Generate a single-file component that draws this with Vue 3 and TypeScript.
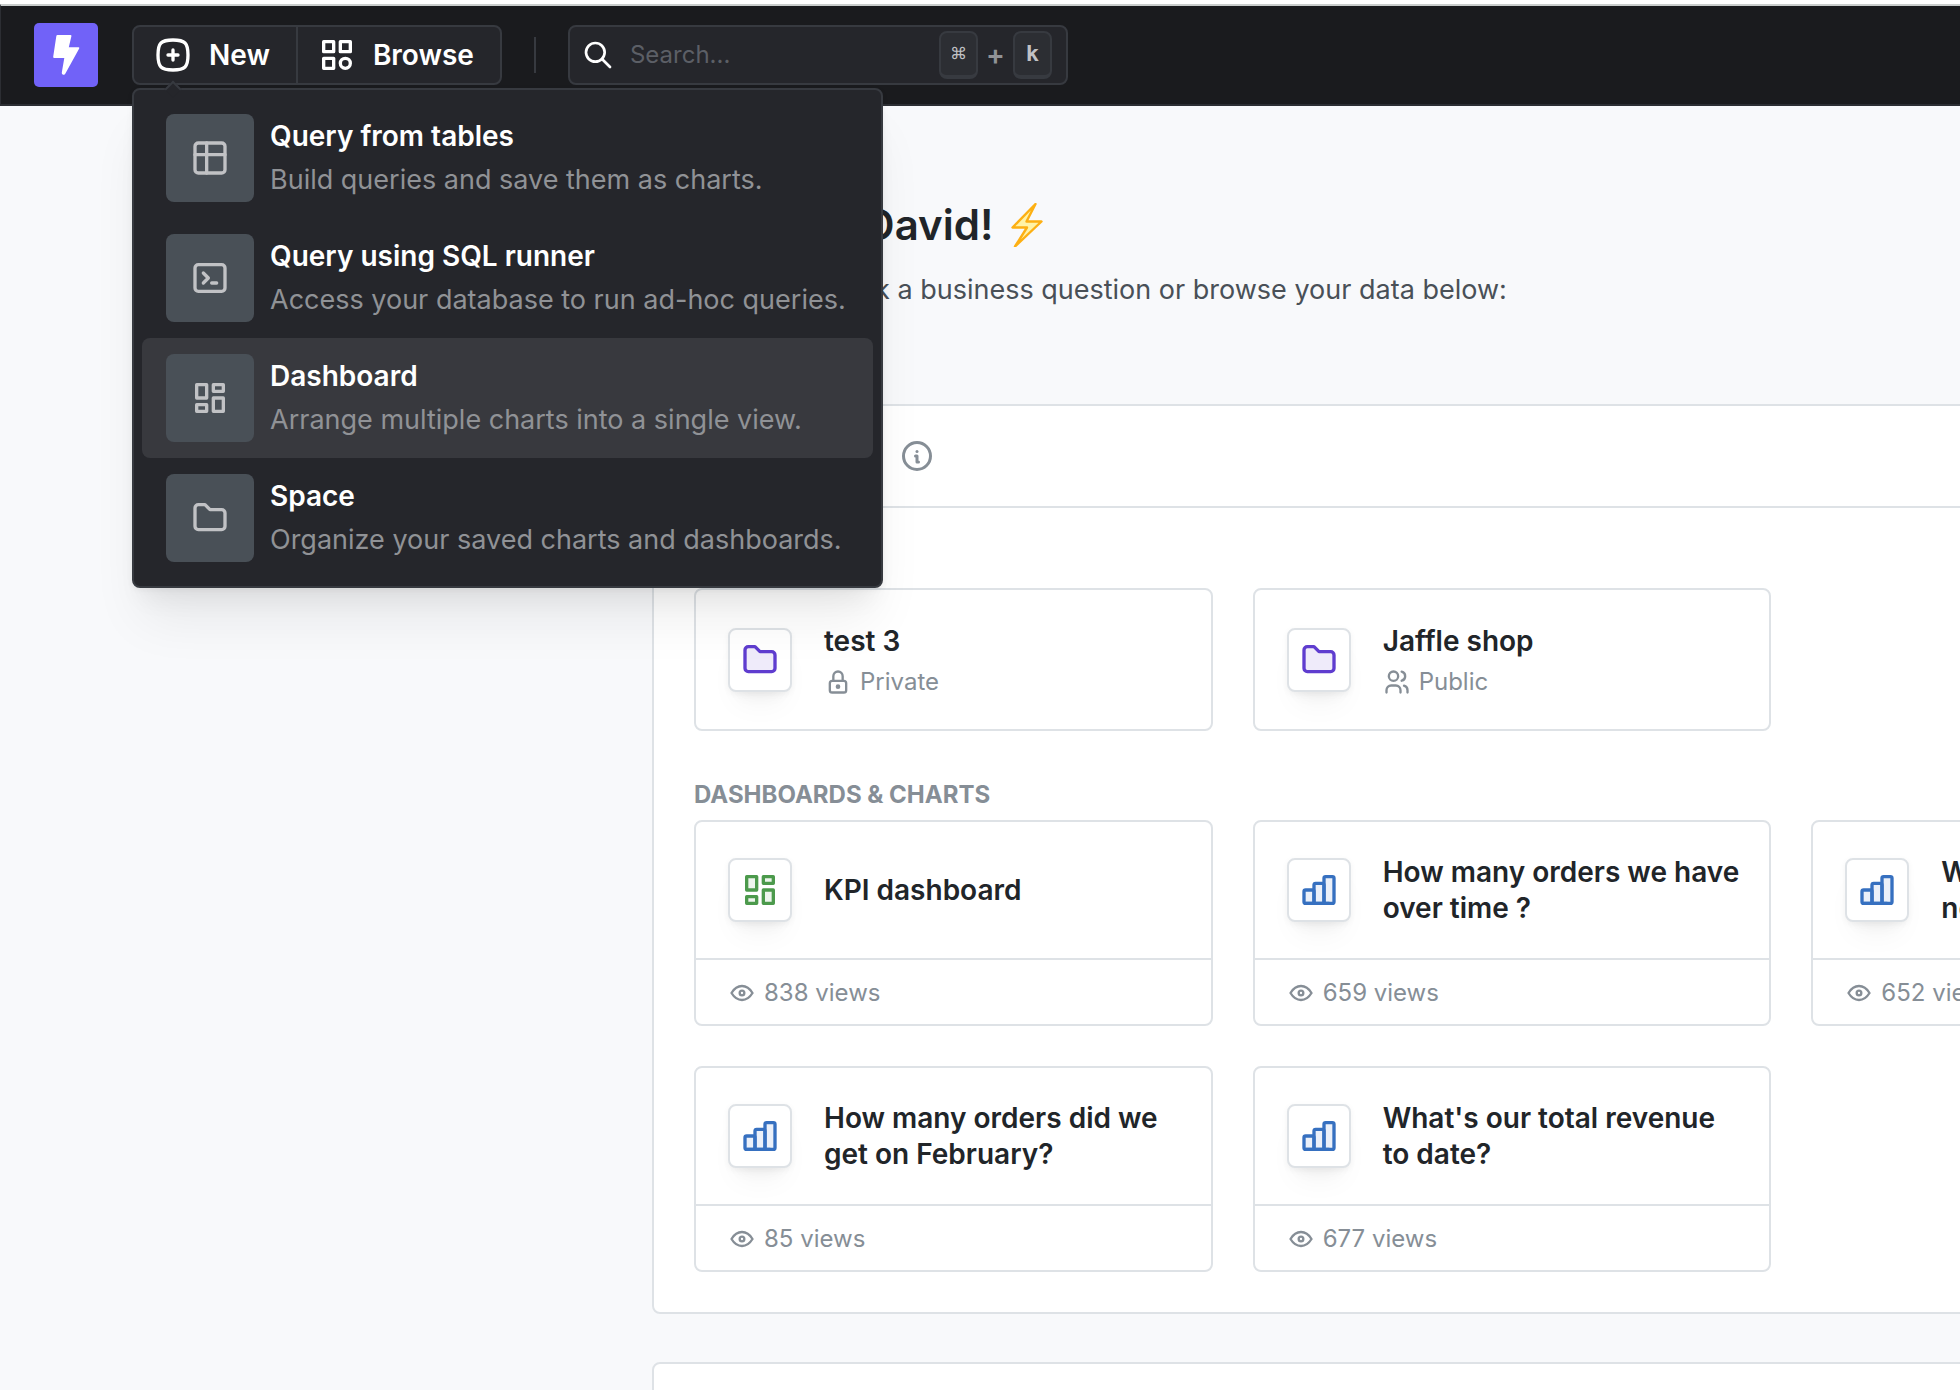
<script setup lang="ts">
import { ref } from 'vue'

interface MenuItem {
  title: string
  description: string
  icon: string[]
}

interface Space {
  name: string
  access: string
  icon: string[]
}

interface Content {
  name: string
  views: number
  kind: 'dashboard' | 'chart'
}

const icons: Record<string, string[]> = {
  plus: [
    'M12 3c7.2 0 9 1.8 9 9s-1.8 9-9 9s-9-1.8-9-9s1.8-9 9-9z',
    'M9 12h6',
    'M12 9v6',
  ],
  category: [
    'M4 4h6v6H4z',
    'M14 4h6v6h-6z',
    'M4 14h6v6H4z',
    'M14 17a3 3 0 1 0 6 0a3 3 0 1 0-6 0',
  ],
  search: ['M3 10a7 7 0 1 0 14 0a7 7 0 1 0-14 0', 'M21 21l-6-6'],
  table: [
    'M3 5a2 2 0 0 1 2-2h14a2 2 0 0 1 2 2v14a2 2 0 0 1-2 2H5a2 2 0 0 1-2-2z',
    'M3 10h18',
    'M10 3v18',
  ],
  terminal: [
    'M8 9l3 3l-3 3',
    'M13 15h3',
    'M3 6a2 2 0 0 1 2-2h14a2 2 0 0 1 2 2v12a2 2 0 0 1-2 2H5a2 2 0 0 1-2-2z',
  ],
  dashboard: ['M4 4h6v8H4z', 'M4 16h6v4H4z', 'M14 12h6v8h-6z', 'M14 4h6v4h-6z'],
  folder: [
    'M5 4h4l3 3h7a2 2 0 0 1 2 2v8a2 2 0 0 1-2 2H5a2 2 0 0 1-2-2V6a2 2 0 0 1 2-2',
  ],
  chart: [
    'M3 13a1 1 0 0 1 1-1h4a1 1 0 0 1 1 1v6a1 1 0 0 1-1 1H4a1 1 0 0 1-1-1z',
    'M9 9a1 1 0 0 1 1-1h4a1 1 0 0 1 1 1v10a1 1 0 0 1-1 1h-4a1 1 0 0 1-1-1z',
    'M15 5a1 1 0 0 1 1-1h4a1 1 0 0 1 1 1v14a1 1 0 0 1-1 1h-4a1 1 0 0 1-1-1z',
    'M4 20h14',
  ],
  lock: [
    'M5 13a2 2 0 0 1 2-2h10a2 2 0 0 1 2 2v6a2 2 0 0 1-2 2H7a2 2 0 0 1-2-2z',
    'M11 16a1 1 0 1 0 2 0a1 1 0 0 0-2 0',
    'M8 11V7a4 4 0 1 1 8 0v4',
  ],
  users: [
    'M5 7a4 4 0 1 0 8 0a4 4 0 1 0-8 0',
    'M3 21v-2a4 4 0 0 1 4-4h4a4 4 0 0 1 4 4v2',
    'M16 3.13a4 4 0 0 1 0 7.75',
    'M21 21v-2a4 4 0 0 0-3-3.85',
  ],
  eye: [
    'M10 12a2 2 0 1 0 4 0a2 2 0 0 0-4 0',
    'M21 12c-2.4 4-5.4 6-9 6c-3.6 0-6.6-2-9-6c2.4-4 5.4-6 9-6c3.6 0 6.6 2 9 6',
  ],
  info: ['M3 12a9 9 0 1 0 18 0a9 9 0 0 0-18 0', 'M12 9h.01', 'M11 12h1v4h1'],
}

const menuItems: MenuItem[] = [
  {
    title: 'Query from tables',
    description: 'Build queries and save them as charts.',
    icon: icons.table,
  },
  {
    title: 'Query using SQL runner',
    description: 'Access your database to run ad-hoc queries.',
    icon: icons.terminal,
  },
  {
    title: 'Dashboard',
    description: 'Arrange multiple charts into a single view.',
    icon: icons.dashboard,
  },
  {
    title: 'Space',
    description: 'Organize your saved charts and dashboards.',
    icon: icons.folder,
  },
]

const spaces: Space[] = [
  { name: 'test 3', access: 'Private', icon: icons.lock },
  { name: 'Jaffle shop', access: 'Public', icon: icons.users },
]

const contents: Content[] = [
  { name: 'KPI dashboard', views: 838, kind: 'dashboard' },
  { name: 'How many orders we have over time ?', views: 659, kind: 'chart' },
  { name: 'Which customers placed new orders?', views: 652, kind: 'chart' },
  { name: 'How many orders did we get on February?', views: 85, kind: 'chart' },
  { name: "What's our total revenue to date?", views: 677, kind: 'chart' },
]

const menuOpen = ref(true)
const activeItem = ref(2)
const query = ref('')
</script>

<template>
  <div class="page">
    <header class="navbar">
      <a class="logo" href="#" aria-label="Home">
        <svg viewBox="0 0 64 64" aria-hidden="true">
          <path
            d="M23.500 12h13q1.200 0 .9 1.200l-2.600 11h9.600q1.300 0 .8 1.200L31.400 50.500q-.7 1.500-2.200 1.200q-1.700-.5-1.400-2.200L30.300 35H20.300q-1.300 0-1.100-1.300L22.300 13.200q.2-1.200 1.200-1.200z"
            fill="#fff"
          />
        </svg>
      </a>

      <div class="nav-group">
        <button
          type="button"
          class="nav-button"
          aria-haspopup="menu"
          :aria-expanded="menuOpen"
          @click="menuOpen = !menuOpen"
        >
          <svg class="icon icon-lg" viewBox="0 0 24 24" aria-hidden="true">
            <path v-for="d in icons.plus" :key="d" :d="d" />
          </svg>
          New
        </button>
        <button type="button" class="nav-button">
          <svg class="icon icon-lg" viewBox="0 0 24 24" aria-hidden="true">
            <path v-for="d in icons.category" :key="d" :d="d" />
          </svg>
          Browse
        </button>

        <div v-if="menuOpen" class="menu" role="menu">
          <button
            v-for="(item, index) in menuItems"
            :key="item.title"
            type="button"
            role="menuitem"
            class="menu-item"
            :class="{ active: index === activeItem }"
            @mouseenter="activeItem = index"
          >
            <span class="menu-icon">
              <svg class="icon icon-lg" viewBox="0 0 24 24" aria-hidden="true">
                <path v-for="d in item.icon" :key="d" :d="d" />
              </svg>
            </span>
            <span class="menu-text">
              <span class="menu-title">{{ item.title }}</span>
              <span class="menu-description">{{ item.description }}</span>
            </span>
          </button>
        </div>
      </div>

      <span class="nav-divider"></span>

      <label class="search">
        <svg class="icon icon-md" viewBox="0 0 24 24" aria-hidden="true">
          <path v-for="d in icons.search" :key="d" :d="d" />
        </svg>
        <input v-model="query" type="text" placeholder="Search..." aria-label="Search" />
        <span class="shortcut">
          <kbd class="symbol">⌘</kbd>
          <span>+</span>
          <kbd>k</kbd>
        </span>
      </label>
    </header>

    <main class="content">
      <section class="greeting">
        <h1>
          Welcome, David!
          <svg class="bolt" viewBox="0 0 32 44" aria-hidden="true">
            <path
              d="M24.500 1L1.500 24.500H16L4 43.500L30.500 18.500H15.500z"
              fill="#fff3a6"
              stroke="#fdb013"
              stroke-width="2.400"
              stroke-linejoin="round"
            />
          </svg>
        </h1>
        <p>Run a query to ask a business question or browse your data below:</p>
      </section>

      <section class="panel">
        <div class="panel-header">
          <h2>Pinned items</h2>
          <svg class="icon icon-info" viewBox="0 0 24 24" aria-hidden="true">
            <path v-for="d in icons.info" :key="d" :d="d" />
          </svg>
        </div>

        <div class="panel-body">
          <section>
            <h3>Spaces</h3>
            <div class="cards">
              <a v-for="space in spaces" :key="space.name" href="#" class="card space-card">
                <span class="tile folder">
                  <svg class="icon icon-lg" viewBox="0 0 24 24" aria-hidden="true">
                    <path v-for="d in icons.folder" :key="d" :d="d" />
                  </svg>
                </span>
                <span class="space-text">
                  <span class="space-name">{{ space.name }}</span>
                  <span class="meta">
                    <svg class="icon icon-sm" viewBox="0 0 24 24" aria-hidden="true">
                      <path v-for="d in space.icon" :key="d" :d="d" />
                    </svg>
                    {{ space.access }}
                  </span>
                </span>
              </a>
            </div>
          </section>

          <section>
            <h3>Dashboards &amp; charts</h3>
            <div class="cards">
              <a v-for="item in contents" :key="item.name" href="#" class="card">
                <span class="card-main">
                  <span class="tile" :class="item.kind">
                    <svg class="icon icon-lg" viewBox="0 0 24 24" aria-hidden="true">
                      <path v-for="d in icons[item.kind]" :key="d" :d="d" />
                    </svg>
                  </span>
                  <span class="card-name">{{ item.name }}</span>
                </span>
                <span class="card-footer meta">
                  <svg class="icon icon-sm" viewBox="0 0 24 24" aria-hidden="true">
                    <path v-for="d in icons.eye" :key="d" :d="d" />
                  </svg>
                  {{ item.views }} views
                </span>
              </a>
            </div>
          </section>
        </div>
      </section>

      <section class="panel next-panel"></section>
    </main>
  </div>
</template>

<style>
html,
body {
  margin: 0;
  background: #f8f9fb;
}
</style>

<style scoped>
.page {
  height: 100vh;
  overflow: hidden;
  box-sizing: border-box;
  border-top: 4px solid #fff;
  background: #f8f9fb;
  color: #212529;
  font-family: Inter, 'Noto Sans', sans-serif;
  font-size: 28px;
  line-height: 44px;
}

.page *,
.page *::before {
  box-sizing: border-box;
}

button,
input {
  font: inherit;
}

a {
  color: inherit;
  text-decoration: none;
}

.icon {
  display: block;
  flex: none;
  fill: none;
  stroke: currentColor;
  stroke-width: 2;
  stroke-linecap: round;
  stroke-linejoin: round;
}

.icon-sm {
  width: 28px;
  height: 28px;
}

.icon-md {
  width: 32px;
  height: 32px;
}

.icon-info {
  width: 36px;
  height: 36px;
  color: #868e96;
}

.icon-lg {
  width: 40px;
  height: 40px;
}

/* Top bar */
.navbar {
  display: flex;
  align-items: center;
  height: 102px;
  padding-left: 33px;
  border-top: 2px solid #c9cdcc;
  border-bottom: 2px solid #2c2e33;
  border-left: 1px solid #2c2e33;
  background: #1a1b1e;
}

.logo {
  width: 64px;
  height: 64px;
  border-radius: 5px;
  background: #7162f8;
}

.logo svg {
  display: block;
}

.nav-group {
  position: relative;
  display: flex;
  height: 60px;
  margin-left: 34px;
  border: 2px solid #373a40;
  border-radius: 8px;
  background: #25262b;
}

.nav-button {
  display: flex;
  align-items: center;
  gap: 16px;
  padding: 0 26px 0 19px;
  border: 0;
  background: none;
  color: #fff;
  font-weight: 600;
}

.nav-button + .nav-button {
  border-left: 2px solid #373a40;
}

.nav-divider {
  width: 2px;
  height: 36px;
  margin: 0 32px;
  background: #373a40;
}

.search {
  display: flex;
  align-items: center;
  width: 500px;
  height: 60px;
  padding: 0 14px 0 12px;
  border: 2px solid #373a40;
  border-radius: 8px;
  background: #25262b;
  color: #fff;
}

.search input {
  flex: 1;
  min-width: 0;
  padding: 0 16px;
  border: 0;
  outline: 0;
  background: none;
  color: #fff;
  font-size: 24px;
}

.search input::placeholder {
  color: #5c5f66;
  opacity: 1;
}

.shortcut {
  display: flex;
  align-items: center;
  gap: 8px;
  color: #909296;
  font-weight: 600;
}

kbd {
  width: 39px;
  height: 48px;
  border: 2px solid #373a40;
  border-bottom-width: 4px;
  border-radius: 8px;
  background: #2c2e33;
  color: #c1c2c5;
  font: 700 22px/42px 'DejaVu Sans Mono', 'Liberation Mono', monospace;
  text-align: center;
}

kbd.symbol {
  font-size: 24px;
  font-weight: 400;
}

/* New menu */
.menu {
  position: absolute;
  z-index: 10;
  top: 61px;
  left: -2px;
  min-width: 751px;
  padding: 8px;
  border: 2px solid #373a40;
  border-radius: 8px;
  background: #25262b;
  box-shadow:
    0 2px 6px rgba(0, 0, 0, 0.05),
    0 40px 50px -10px rgba(0, 0, 0, 0.07),
    0 20px 24px -10px rgba(0, 0, 0, 0.06);
}

.menu::before {
  content: '';
  position: absolute;
  top: -7px;
  left: 33px;
  width: 12px;
  height: 12px;
  border: 2px solid #373a40;
  border-right: 0;
  border-bottom: 0;
  background: #25262b;
  transform: rotate(45deg);
}

.menu-item {
  display: flex;
  align-items: center;
  gap: 16px;
  width: 100%;
  padding: 16px 24px;
  border: 0;
  border-radius: 8px;
  background: none;
  text-align: left;
  white-space: nowrap;
}

.menu-item.active {
  background: #38393e;
}

.menu-icon {
  display: grid;
  place-items: center;
  width: 88px;
  height: 88px;
  border-radius: 8px;
  background: #495057;
  color: #c1c2c5;
}

.menu-text,
.space-text {
  display: flex;
  flex-direction: column;
}

.menu-title {
  color: #fff;
  font-weight: 600;
}

.menu-description {
  color: #909296;
  font-size: 27px;
}

/* Page body */
.content {
  width: 1720px;
  margin-left: 652px;
}

.greeting {
  padding: 89px 0 92px;
}

h1,
h2,
h3,
p {
  margin: 0;
}

h1 {
  display: flex;
  align-items: center;
  gap: 18px;
  font-size: 42px;
  font-weight: 600;
  line-height: 60px;
}

.bolt {
  width: 32px;
  height: 44px;
}

.greeting p {
  margin-top: 13px;
  color: #495057;
  font-size: 27px;
}

.panel {
  border: 2px solid #dee2e6;
  border-radius: 8px;
  background: #fff;
}

.panel-header {
  display: flex;
  align-items: center;
  gap: 30px;
  height: 102px;
  padding: 0 40px;
  border-bottom: 2px solid #dee2e6;
}

h2 {
  font-size: 28px;
  font-weight: 600;
}

.panel-body {
  display: flex;
  flex-direction: column;
  gap: 45px;
  padding: 36px 40px 40px;
}

h3 {
  margin-bottom: 6px;
  color: #868e96;
  font-size: 24px;
  font-weight: 700;
  line-height: 38px;
  text-transform: uppercase;
}

.cards {
  display: grid;
  grid-template-columns: repeat(3, 1fr);
  gap: 40px;
}

.card {
  display: block;
  border: 2px solid #dee2e6;
  border-radius: 8px;
}

.space-card {
  display: flex;
  align-items: center;
  gap: 32px;
  height: 143px;
  padding: 0 32px;
}

.space-text {
  gap: 2px;
}

.space-name {
  font-weight: 600;
  line-height: 42px;
}

.card-main {
  display: flex;
  align-items: center;
  gap: 32px;
  height: 136px;
  padding: 0 28px 0 32px;
}

.card-name {
  flex: 1;
  font-weight: 600;
  line-height: 36px;
}

.tile {
  display: grid;
  flex: none;
  place-items: center;
  width: 64px;
  height: 64px;
  border: 2px solid #dee2e6;
  border-radius: 8px;
  background: #fff;
  box-shadow:
    0 2px 6px rgba(0, 0, 0, 0.05),
    0 20px 30px -10px rgba(0, 0, 0, 0.05),
    0 14px 14px -10px rgba(0, 0, 0, 0.04);
}

.tile .icon {
  fill: currentColor;
  fill-opacity: 0.1;
}

.folder {
  color: #5f3dcf;
}

.dashboard {
  color: #4c9a4c;
}

.chart {
  color: #3670c0;
}

.meta {
  display: flex;
  align-items: center;
  gap: 8px;
  color: #868e96;
  font-size: 24px;
  line-height: 36px;
}

.card-footer {
  height: 66px;
  padding: 2px 32px 0;
  border-top: 2px solid #dee2e6;
}

.next-panel {
  min-height: 400px;
  margin-top: 48px;
}
</style>
